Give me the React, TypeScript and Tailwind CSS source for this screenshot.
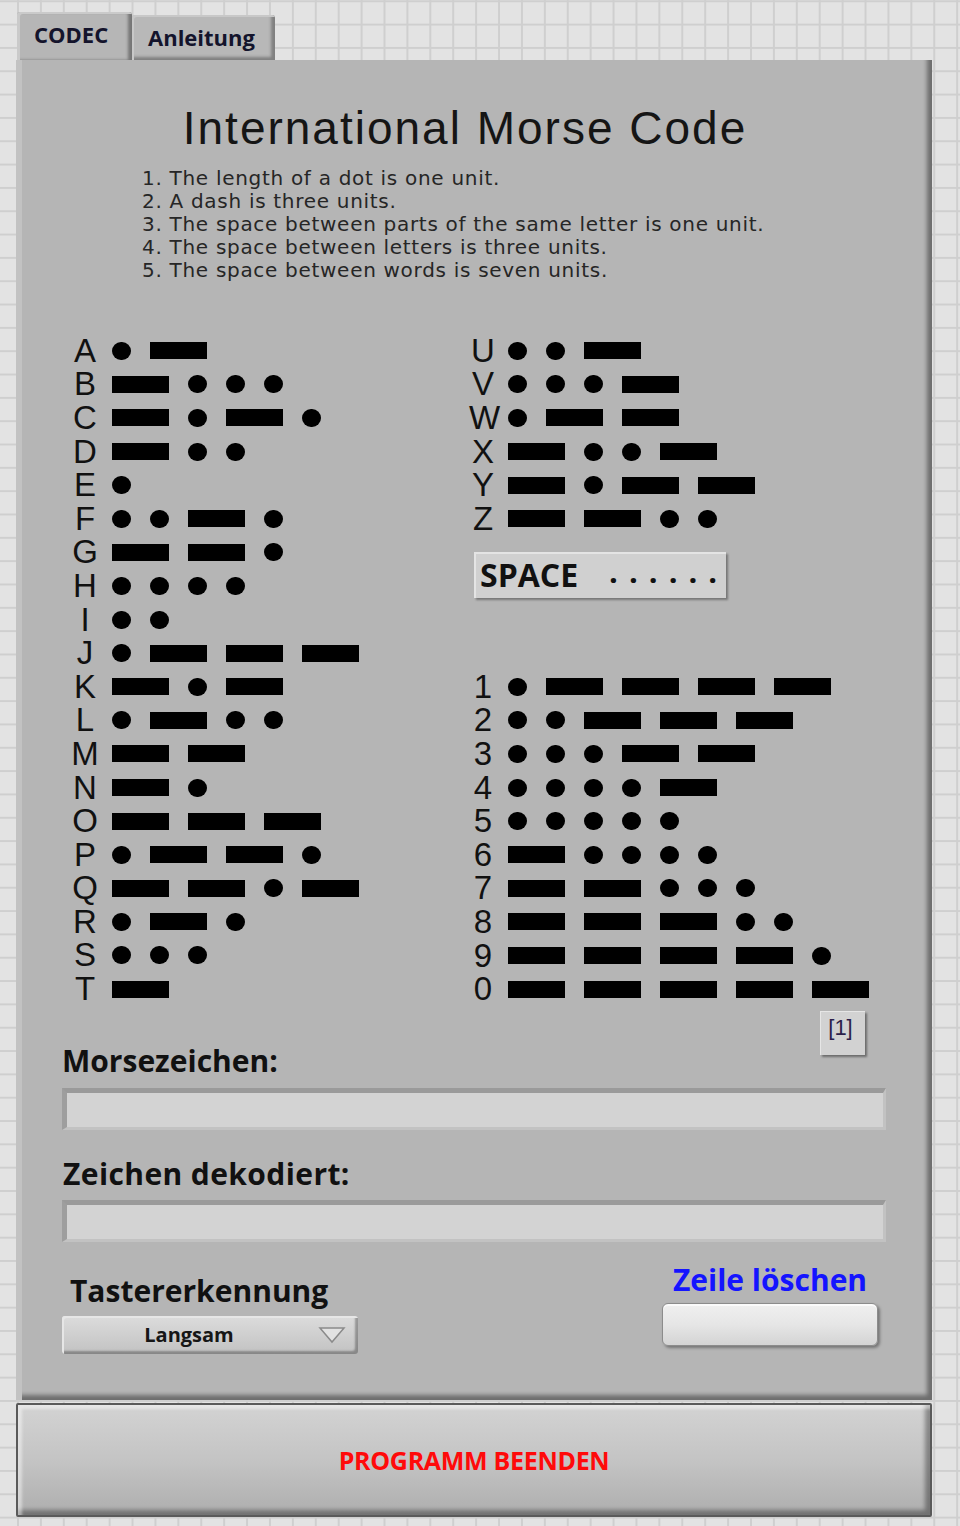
import React from 'react'

type Entry = [string, string]

const LEFT: Entry[] = [
  ['A', '.-'], ['B', '-...'], ['C', '-.-.'], ['D', '-..'], ['E', '.'],
  ['F', '..-.'], ['G', '--.'], ['H', '....'], ['I', '..'], ['J', '.---'],
  ['K', '-.-'], ['L', '.-..'], ['M', '--'], ['N', '-.'], ['O', '---'],
  ['P', '.--.'], ['Q', '--.-'], ['R', '.-.'], ['S', '...'], ['T', '-'],
]

const LETTERS_RIGHT: Entry[] = [
  ['U', '..-'], ['V', '...-'], ['W', '.--'], ['X', '-..-'], ['Y', '-.--'], ['Z', '--..'],
]

const DIGITS: Entry[] = [
  ['1', '.----'], ['2', '..---'], ['3', '...--'], ['4', '....-'], ['5', '.....'],
  ['6', '-....'], ['7', '--...'], ['8', '---..'], ['9', '----.'], ['0', '-----'],
]

const RULES = [
  '1. The length of a dot is one unit.',
  '2. A dash is three units.',
  '3. The space between parts of the same letter is one unit.',
  '4. The space between letters is three units.',
  '5. The space between words is seven units.',
]

const ui = "font-['Open_Sans',sans-serif] font-bold"

function Code({ code }: { code: string }) {
  return (
    <div className="flex items-center gap-[19px]">
      {code.split('').map((c, i) =>
        c === '.' ? (
          <span key={i} className="block w-[19px] h-[18px] rounded-full bg-black" />
        ) : (
          <span key={i} className="block w-[57px] h-[17px] bg-black" />
        ),
      )}
    </div>
  )
}

function Row({ entry, gap }: { entry: Entry; gap: string }) {
  return (
    <div className="flex items-center h-[33.6px]">
      <span className={`w-[28px] text-center text-[33px] leading-[32px] text-[#111] font-['Liberation_Sans',sans-serif] ${gap}`}>
        {entry[0]}
      </span>
      <Code code={entry[1]} />
    </div>
  )
}

function Field() {
  return (
    <div className="w-[824px] h-[42px] bg-[#d3d3d3] border-t-[5px] border-l-[5px] border-b-[3px] border-r-[3px] border-t-[#9a9a9a] border-l-[#9e9e9e] border-b-[#c2c2c2] border-r-[#c2c2c2]" />
  )
}

export default function App() {
  return (
    <div className="w-[960px] h-[1526px] bg-[#e3e3e3] bg-[linear-gradient(to_right,#cfcfcf_2px,transparent_2px),linear-gradient(to_bottom,#cfcfcf_2px,transparent_2px)] bg-[size:22.92px_23.33px] bg-[position:17px_0.3px] flex flex-col pt-[12px] pl-[16px]">
      {/* tabs */}
      <div className="flex items-end h-[48px] ml-px">
        <div className="w-[115px] h-[48px] bg-[#b6b6b6] rounded-t-[3px] shadow-[inset_3px_2px_0_#cacaca,inset_-4px_0_3px_rgba(0,0,0,0.35)] pl-[17px] pt-[7px]">
          <span className={`${ui} text-[22px] leading-[30px] text-[#14142c]`}>CODEC</span>
        </div>
        <div className="w-[143px] h-[45px] bg-[#b8b8b8] rounded-t-[3px] shadow-[inset_2px_2px_0_#c8c8c8,inset_-4px_-3px_3px_rgba(0,0,0,0.3)] pl-[16px] pt-[7px]">
          <span className={`${ui} text-[22px] leading-[30px] text-[#14142c]`}>Anleitung</span>
        </div>
      </div>

      {/* main panel */}
      <div className="relative w-[916px] h-[1340px] bg-[#b5b5b5] shadow-[inset_6px_0_0_#c2c2c2,inset_-5px_-5px_4px_rgba(0,0,0,0.4)] flex flex-col">
        <h1 className="mt-[44px] text-center pr-[18px] text-[46px] leading-[48px] tracking-[2px] text-[#151515] font-['Liberation_Sans',sans-serif] font-normal">
          International Morse Code
        </h1>
        <div className="mt-[15px] ml-[126px] text-[20px] leading-[23px] tracking-[0.7px] text-[#262626] font-['DejaVu_Sans',sans-serif]">
          {RULES.map(r => (
            <div key={r}>{r}</div>
          ))}
        </div>

        {/* morse table */}
        <div className="mt-[52px] ml-[55px] flex">
          <div className="w-[398px] flex flex-col">
            {LEFT.map(e => (
              <Row key={e[0]} entry={e} gap="mr-[13px]" />
            ))}
          </div>
          <div className="flex flex-col">
            {LETTERS_RIGHT.map(e => (
              <Row key={e[0]} entry={e} gap="mr-[11px]" />
            ))}
            <div className="h-[134.4px] pt-[16px] pl-[5px]">
              <div className="w-[252px] h-[46px] flex items-center pl-[6px] bg-[#d0d0d0] shadow-[inset_2px_2px_0_#e4e4e4,2px_2px_2px_rgba(0,0,0,0.35)]">
                <span className={`${ui} text-[32px] leading-none text-[#111]`}>SPACE</span>
                <span className={`${ui} text-[31px] leading-none text-[#111] ml-[31px] tracking-[11px] -translate-y-[3px]`}>......</span>
              </div>
            </div>
            {DIGITS.map(e => (
              <Row key={e[0]} entry={e} gap="mr-[11px]" />
            ))}
          </div>
        </div>

        {/* Morsezeichen label + index */}
        <div className="mt-[5px] ml-[46px] w-[803px] h-[68px] flex justify-between">
          <span className={`${ui} self-end text-[30px] leading-[36px] text-[#111]`}>Morsezeichen:</span>
          <div className="w-[45px] h-[44px] bg-[#d2d2d2] shadow-[inset_1px_1px_0_#e6e6e6,2px_2px_2px_rgba(0,0,0,0.4)] flex justify-center pt-[4px] pr-[4px]">
            <span className="text-[22px] leading-[26px] text-[#2c1f4a] font-['Liberation_Sans',sans-serif]">[1]</span>
          </div>
        </div>
        <div className="mt-[9px] ml-[46px]">
          <Field />
        </div>
        <span className={`${ui} mt-[26px] ml-[47px] text-[30px] leading-[36px] tracking-[0.4px] text-[#111]`}>Zeichen dekodiert:</span>
        <div className="mt-[8px] ml-[46px]">
          <Field />
        </div>

        {/* bottom controls */}
        <div className="mt-[20px] ml-[46px] flex justify-between w-[816px]">
          <div className="mt-[11px] flex flex-col">
            <span className={`${ui} ml-[8px] text-[30px] leading-[36px] text-[#111]`}>Tastererkennung</span>
            <div className="mt-[7px] w-[296px] h-[38px] rounded-[3px] bg-gradient-to-b from-[#dcdcdc] to-[#c2c2c2] shadow-[inset_2px_2px_0_#e6e6e6,inset_-3px_-3px_2px_rgba(0,0,0,0.3)] flex items-center">
              <span className={`${ui} w-[254px] text-center text-[20px] leading-none text-[#161616]`}>Langsam</span>
              <svg width="28" height="18" viewBox="0 0 28 18" className="ml-[2px]">
                <polygon points="2,2 26,2 14,16" fill="#e2e2e2" stroke="#8a8a8a" strokeWidth="1.5" />
              </svg>
            </div>
          </div>
          <div className="flex flex-col items-center">
            <span className={`${ui} text-[30px] leading-[36px] text-[#1414ff]`}>Zeile löschen</span>
            <div className="mt-[5px] w-[216px] h-[43px] rounded-[6px] border border-[#8c8c8c] bg-gradient-to-b from-[#f0f0f0] via-[#e6e6e6] to-[#d4d4d4] shadow-[inset_0_2px_0_#fafafa,2px_2px_3px_rgba(0,0,0,0.35)]" />
          </div>
        </div>
      </div>

      {/* quit button */}
      <div className="mt-[3px] w-[916px] h-[114px] rounded-[2px] border-2 border-[#5a5a5a] bg-gradient-to-b from-[#d3d3d3] via-[#c4c4c4] to-[#aeaeae] shadow-[inset_4px_4px_3px_rgba(255,255,255,0.45),inset_-5px_-5px_4px_rgba(0,0,0,0.35)] flex items-center justify-center">
        <span className={`${ui} text-[25px] leading-none text-[#ff0a0a] tracking-[-0.3px]`}>PROGRAMM BEENDEN</span>
      </div>
    </div>
  )
}
